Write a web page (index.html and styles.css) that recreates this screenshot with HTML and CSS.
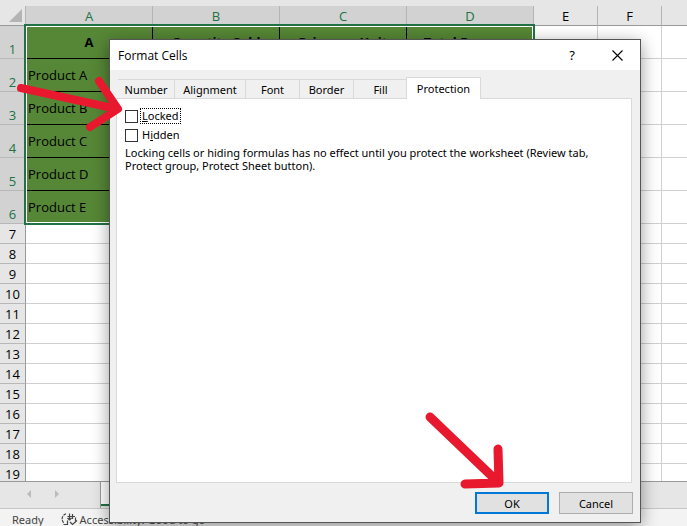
FILE: index.html
```
<!DOCTYPE html>
<html lang="en">
<head>
    <meta charset="UTF-8">
    <meta name="viewport" content="width=device-width, initial-scale=1.0">
    <title>Format Cells</title>
    <link rel="stylesheet" href="styles.css">
</head>
<body>
    <div class="app">
        <main class="grid">
            <table class="sheet">
                <colgroup>
                    <col class="col-num">
                    <col class="col-wide"><col class="col-wide"><col class="col-wide"><col class="col-wide">
                    <col class="col-narrow"><col class="col-narrow">
                    <col>
                </colgroup>
                <thead>
                    <tr>
                        <th class="corner"><svg width="13" height="13" viewBox="0 0 13 13"><path d="M13 0V13H0Z" fill="#b4b4b4"/></svg></th>
                        <th class="on">A</th><th class="on">B</th><th class="on">C</th><th class="on">D</th>
                        <th>E</th><th>F</th><th></th>
                    </tr>
                </thead>
                <tbody>
                    <tr class="data head"><th>1</th><td>A</td><td>Quantity Sold</td><td>Price per Unit</td><td>Total Revenue</td><td></td><td></td><td></td></tr>
                    <tr class="data"><th>2</th><td>Product A</td><td></td><td></td><td></td><td></td><td></td><td></td></tr>
                    <tr class="data"><th>3</th><td>Product B</td><td></td><td></td><td></td><td></td><td></td><td></td></tr>
                    <tr class="data"><th>4</th><td>Product C</td><td></td><td></td><td></td><td></td><td></td><td></td></tr>
                    <tr class="data"><th>5</th><td>Product D</td><td></td><td></td><td></td><td></td><td></td><td></td></tr>
                    <tr class="data"><th>6</th><td>Product E</td><td></td><td></td><td></td><td></td><td></td><td></td></tr>
                    <tr><th>7</th><td></td><td></td><td></td><td></td><td></td><td></td><td></td></tr>
                    <tr><th>8</th><td></td><td></td><td></td><td></td><td></td><td></td><td></td></tr>
                    <tr><th>9</th><td></td><td></td><td></td><td></td><td></td><td></td><td></td></tr>
                    <tr><th>10</th><td></td><td></td><td></td><td></td><td></td><td></td><td></td></tr>
                    <tr><th>11</th><td></td><td></td><td></td><td></td><td></td><td></td><td></td></tr>
                    <tr><th>12</th><td></td><td></td><td></td><td></td><td></td><td></td><td></td></tr>
                    <tr><th>13</th><td></td><td></td><td></td><td></td><td></td><td></td><td></td></tr>
                    <tr><th>14</th><td></td><td></td><td></td><td></td><td></td><td></td><td></td></tr>
                    <tr><th>15</th><td></td><td></td><td></td><td></td><td></td><td></td><td></td></tr>
                    <tr><th>16</th><td></td><td></td><td></td><td></td><td></td><td></td><td></td></tr>
                    <tr><th>17</th><td></td><td></td><td></td><td></td><td></td><td></td><td></td></tr>
                    <tr><th>18</th><td></td><td></td><td></td><td></td><td></td><td></td><td></td></tr>
                    <tr><th>19</th><td></td><td></td><td></td><td></td><td></td><td></td><td></td></tr>
                </tbody>
            </table>
            <div class="selection"></div>
        </main>

        <div class="sheet-bar">
            <div class="sheet-nav">
                <button type="button" aria-label="Previous sheet"><svg width="4" height="8" viewBox="0 0 4 8"><path d="M4 0V8L0 4Z" fill="#bbb"/></svg></button>
                <button type="button" aria-label="Next sheet"><svg width="4" height="8" viewBox="0 0 4 8"><path d="M0 0V8L4 4Z" fill="#bbb"/></svg></button>
            </div>
            <div class="sheet-tab"></div>
        </div>

        <footer class="status">
            <span class="ready">Ready</span>
            <svg width="17" height="13" viewBox="0 0 17 13" fill="none" stroke="#444" stroke-width="1.2">
                <path d="M5 .8C.5 2.500 0 7.500 3 10" stroke-dasharray="3 1"/>
                <path d="M2.500 11.500H6.500V7.500"/>
                <path d="M8.500 .5V7M6.500 3.500H14M6.500 5L8.500 7L10.500 5M11.500 1V6"/>
                <path d="M14.500 4.500V8M9 9L11.500 11.500L16 7.500"/>
            </svg>
            <span>Accessibility: Good to go</span>
        </footer>
    </div>

    <div class="dialog" role="dialog" aria-labelledby="dialogTitle">
        <div class="title-bar">
            <span class="title" id="dialogTitle">Format Cells</span>
            <button type="button" class="help" aria-label="Help">?</button>
            <button type="button" class="close" aria-label="Close"><svg width="11" height="11" viewBox="0 0 11 11"><path d="M.5 .5L10.5 10.5M10.5 .5L.5 10.5" stroke="#000" stroke-width="1.1"/></svg></button>
        </div>
        <form class="dialog-body">
            <div class="tabs" role="tablist">
                <button type="button" role="tab" class="tab tab-number">Number</button>
                <button type="button" role="tab" class="tab tab-alignment">Alignment</button>
                <button type="button" role="tab" class="tab">Font</button>
                <button type="button" role="tab" class="tab">Border</button>
                <button type="button" role="tab" class="tab">Fill</button>
                <button type="button" role="tab" class="tab active" aria-selected="true">Protection</button>
            </div>
            <div class="panel">
                <div class="check">
                    <input type="checkbox" id="locked">
                    <label for="locked" class="focused"><u>L</u>ocked</label>
                </div>
                <div class="check">
                    <input type="checkbox" id="hidden">
                    <label for="hidden">H<u>i</u>dden</label>
                </div>
                <p class="note">Locking cells or hiding formulas has no effect until you protect the worksheet (Review tab, Protect group, Protect Sheet button).</p>
            </div>
            <div class="actions">
                <button type="button" class="btn primary">OK</button>
                <button type="button" class="btn">Cancel</button>
            </div>
        </form>
    </div>

    <!-- red pointer arrows over the window -->
    <svg class="arrow" width="687" height="526" viewBox="0 0 687 526" fill="none" stroke="#e8192f" stroke-linecap="round" stroke-linejoin="round">
        <path stroke-width="8" d="M21 88L117 109M99 81L118 109L90 127"/>
        <path stroke-width="9" d="M430 417L499 483M498 449L499 483L465 484"/>
    </svg>
</body>
</html>
```

FILE: styles.css
```
* {
    box-sizing: border-box;
}

body {
    margin: 0;
    font-family: "Noto Sans", "Open Sans", sans-serif;
    font-size: 11px;
    color: #000;
    overflow: hidden;
}

button {
    font: inherit;
    color: inherit;
    border: 0;
    padding: 0;
    background: none;
}

/* ---------- worksheet ---------- */

.app {
    display: flex;
    flex-direction: column;
    height: 100vh;
    background-color: #e6e6e6;
    padding-top: 6px;
}

.grid {
    position: relative;
    flex: 1;
    min-height: 0;
    overflow: hidden;
    background-color: #fff;
}

.sheet {
    width: 100%;
    table-layout: fixed;
    border-collapse: separate;
    border-spacing: 0;
    font-family: "Open Sans", "Noto Sans", sans-serif;
    font-size: 13px;
    line-height: 18px;
}

.col-num {
    width: 26px;
}

.col-wide {
    width: 127px;
}

.col-narrow {
    width: 64px;
}

.sheet th,
.sheet td {
    padding: 0;
    height: 20px;
    border-right: 1px solid #d0d0d0;
    border-bottom: 1px solid #d0d0d0;
    white-space: nowrap;
    overflow: hidden;
}

.sheet th {
    background-color: #e6e6e6;
    font-weight: normal;
    text-align: center;
}

.sheet thead th {
    border-right-color: #b4b4b4;
    border-bottom-color: #999;
}

.sheet tbody th {
    border-right-color: #999;
    border-bottom-color: #b8b8b8;
}

.sheet th:last-child,
.sheet td:last-child {
    border-right: 0;
}

.sheet thead .on,
.sheet .data th {
    background-color: #d2d2d2;
    color: #217346;
}

.sheet .corner {
    text-align: right;
    padding-right: 3px;
}

.corner svg {
    display: block;
    margin-left: auto;
}

.sheet .data th,
.sheet .data td {
    height: 33px;
}

.sheet .data th {
    vertical-align: bottom;
}

.sheet .data td:nth-child(-n+5) {
    background-color: #568736;
    border-color: #000;
    padding-left: 2px;
}

.sheet .head td:nth-child(-n+5) {
    padding-left: 0;
    text-align: center;
    font-weight: bold;
}

.selection {
    position: absolute;
    top: 18px;
    left: 24px;
    width: 511px;
    height: 201px;
    border: 2px solid #217346;
    box-shadow: inset 0 0 0 1px #fff;
}

.sheet-bar {
    display: flex;
    height: 28px;
    border-top: 1px solid #999;
    border-bottom: 1px solid #c6c6c6;
}

.sheet-nav {
    display: flex;
    align-items: center;
    gap: 24px;
    width: 101px;
    padding: 0 0 2px 27px;
    border-right: 1px solid #999;
}

.sheet-nav button {
    display: flex;
}

.sheet-tab {
    width: 80px;
    height: 24px;
    background-color: #fff;
    border-bottom: 2px solid #217346;
}

.status {
    display: flex;
    align-items: center;
    height: 17px;
    padding: 4px 0 0 12px;
    line-height: 12px;
    background-color: #f3f3f3;
    color: #444;
}

.ready {
    margin-right: 17px;
}

.status svg {
    margin-right: 2px;
}

/* ---------- dialog ---------- */

.dialog {
    position: absolute;
    top: 39px;
    right: 46px;
    bottom: 3px;
    left: 109px;
    display: flex;
    flex-direction: column;
    border: 1px solid #555;
    background-color: #f0f0f0;
    box-shadow: 0 4px 16px rgba(0, 0, 0, .4);
}

.title-bar {
    display: flex;
    align-items: center;
    height: 30px;
    padding: 0 17px 0 8px;
    background-color: #fff;
}

.title {
    flex: 1;
    font-family: "Open Sans", "Noto Sans", sans-serif;
    font-size: 12px;
}

.help {
    margin-right: 37px;
    font-size: 13px;
}

.close {
    display: flex;
}

.dialog-body {
    display: flex;
    flex-direction: column;
    flex: 1;
    margin: 0;
    padding: 7px 7px 8px 6px;
}

.tabs {
    display: flex;
    align-items: flex-end;
    padding-left: 2px;
}

.tab {
    width: 54px;
    height: 19px;
    padding-top: 1px;
    border-top: 1px solid #d9d9d9;
    border-right: 1px solid #d9d9d9;
}

.tab-number {
    width: 57px;
}

.tab-alignment {
    width: 71px;
}

.tab.active {
    width: 75px;
    height: 22px;
    margin: 0 0 -1px -2px;
    padding: 0 0 1px;
    border-left: 1px solid #d9d9d9;
    background-color: #fff;
    z-index: 1;
}

.panel {
    flex: 1;
    margin-right: 1px;
    padding: 9px 8px;
    background-color: #fff;
    border: 1px solid #d9d9d9;
}

.check {
    display: flex;
    align-items: center;
    gap: 2px;
    height: 16px;
    margin-bottom: 3px;
}

.check input {
    appearance: none;
    width: 13px;
    height: 13px;
    margin: 0;
    border: 1px solid #333;
    background-color: #fff;
}

.check label {
    padding: 0 1px;
    line-height: 14px;
    border: 1px solid transparent;
}

.check .focused {
    border: 1px dotted #000;
}

.note {
    margin: 0;
    line-height: 13px;
}

.actions {
    display: flex;
    justify-content: flex-end;
    gap: 10px;
    padding-top: 9px;
}

.btn {
    width: 74px;
    height: 22px;
    border: 1px solid #adadad;
    background-color: #e1e1e1;
}

.btn.primary {
    border: 2px solid #0078d7;
}

.arrow {
    position: absolute;
    top: 0;
    left: 0;
    pointer-events: none;
}
```
